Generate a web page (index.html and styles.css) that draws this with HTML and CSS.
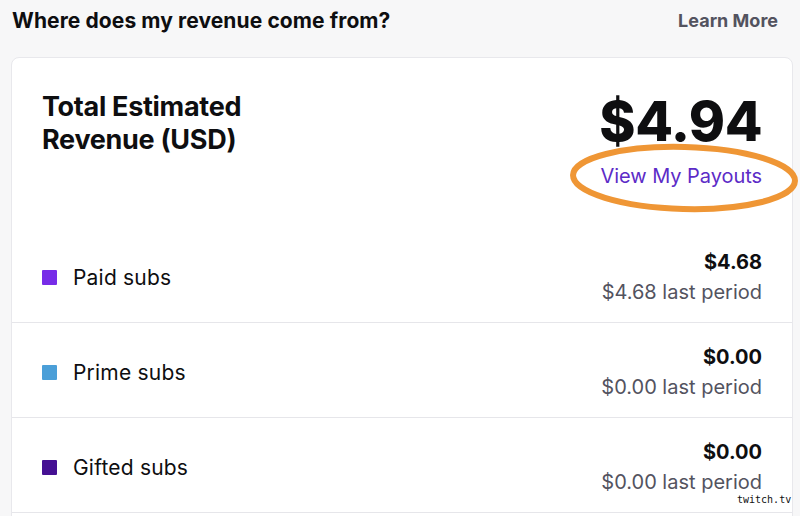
FILE: index.html
```html
<!DOCTYPE html>
<html lang="en">
<head>
<meta charset="utf-8">
<title>Revenue</title>
<link rel="stylesheet" href="styles.css">
</head>
<body>
<div class="page">
  <header class="top">
    <h2 class="question">Where does my revenue come from?</h2>
    <a class="learn" href="#">Learn More</a>
  </header>
  <section class="card">
    <div class="summary">
      <h3 class="total-label">Total Estimated<br>Revenue (USD)</h3>
      <div class="total-side">
        <div class="total">$4.94</div>
        <a class="payouts" href="#">View My Payouts</a>
      </div>
    </div>
    <div class="row">
      <div class="label"><span class="swatch paid"></span>Paid subs</div>
      <div class="amounts"><div class="amount">$4.68</div><div class="last">$4.68 last period</div></div>
    </div>
    <div class="row">
      <div class="label"><span class="swatch prime"></span>Prime subs</div>
      <div class="amounts"><div class="amount">$0.00</div><div class="last">$0.00 last period</div></div>
    </div>
    <div class="row">
      <div class="label"><span class="swatch gifted"></span>Gifted subs</div>
      <div class="amounts"><div class="amount">$0.00</div><div class="last">$0.00 last period</div></div>
    </div>
    <div class="row empty"></div>
  </section>
  <svg class="circle" width="240" height="80" viewBox="0 0 240 80" aria-hidden="true">
    <ellipse cx="124" cy="38" rx="111" ry="31" fill="none" stroke="#ef9635" stroke-width="6" transform="rotate(1.5 124 38)"/>
  </svg>
  <div class="mark">twitch.tv</div>
</div>
</body>
</html>
```
FILE: styles.css
```css
html, body {
  margin: 0;
  padding: 0;
  height: 100%;
  overflow: hidden;
}
body {
  background: #f7f7f8;
  font-family: Inter, "Noto Sans", sans-serif;
  color: #0e0e10;
}
.page {
  position: relative;
  padding: 0 7px 0 11px;
}
.top {
  display: flex;
  justify-content: space-between;
  align-items: center;
  height: 40px;
  padding: 0 15px 0 1px;
  margin-bottom: 17px;
}
.question {
  margin: 0;
  font-size: 21px;
  font-weight: 700;
  letter-spacing: 0.1px;
}
.learn {
  color: #53535f;
  font-size: 18px;
  font-weight: 700;
  text-decoration: none;
}
.card {
  background: #fff;
  border: 1px solid #e8e8ec;
  border-radius: 8px;
}
.summary {
  display: flex;
  justify-content: space-between;
  align-items: flex-start;
  height: 170px;
  padding: 32px 30px 0;
  box-sizing: border-box;
}
.total-label {
  margin: 0;
  font-size: 27px;
  line-height: 33px;
  font-weight: 700;
  letter-spacing: -0.3px;
}
.total-side {
  display: flex;
  flex-direction: column;
  align-items: flex-end;
}
.total {
  font-size: 55px;
  line-height: 62px;
  font-weight: 800;
  letter-spacing: -0.5px;
}
.payouts {
  margin-top: 12px;
  color: #5c2bc7;
  font-size: 20px;
  letter-spacing: -0.05px;
  text-decoration: none;
}
.row {
  display: flex;
  justify-content: space-between;
  align-items: center;
  height: 94px;
  padding: 0 30px;
  border-bottom: 1px solid #e6e6ea;
}
.row.empty {
  border-bottom: none;
}
.label {
  display: flex;
  align-items: center;
  font-size: 21px;
  letter-spacing: 0.2px;
  padding-top: 4px;
}
.swatch {
  width: 15px;
  height: 15px;
  border-radius: 1px;
  margin-right: 16px;
}
.paid { background: #772ce8; }
.prime { background: #4b9fd8; }
.gifted { background: #451093; }
.amounts {
  text-align: right;
  font-size: 20px;
  line-height: 30px;
  padding-top: 3px;
}
.amount {
  font-weight: 700;
}
.last {
  color: #53535f;
}
.circle {
  position: absolute;
  left: 560px;
  top: 140px;
}
.mark {
  position: absolute;
  left: 737px;
  top: 494px;
  font-family: "DejaVu Sans Mono", monospace;
  font-size: 10px;
  color: #111;
  text-shadow: 0 0 2px #fff, 0 0 2px #fff;
}
```
